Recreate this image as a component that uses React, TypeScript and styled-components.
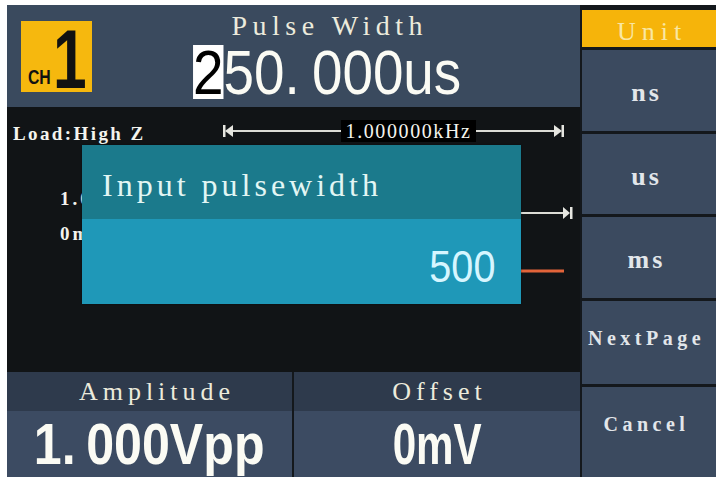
import React from 'react'
import styled, { createGlobalStyle } from 'styled-components'

const GlobalStyle = createGlobalStyle`
  html, body {
    margin: 0;
    padding: 0;
    background: #ffffff;
  }
  body {
    font-family: 'Liberation Serif', 'DejaVu Serif', serif;
  }
`

const Frame = styled.div`
  width: 709px;
  height: 472px;
  margin: 5px 0 0 7px;
  display: grid;
  grid-template-columns: 573px 134px;
  column-gap: 2px;
  background: #14181c;
`

const Main = styled.div`
  display: flex;
  flex-direction: column;
  min-width: 0;
`

const Header = styled.div`
  height: 102px;
  flex: none;
  display: flex;
  padding: 0 18px 0 14px;
  box-sizing: border-box;
  background: #3a4a5e;
`

const Badge = styled.div`
  align-self: center;
  width: 71px;
  height: 71px;
  flex: none;
  box-sizing: border-box;
  padding: 0 0 3px 7px;
  display: flex;
  align-items: flex-end;
  background: #f6b80e;
  color: #111;
  font-family: 'Liberation Sans', Arial, sans-serif;
  font-weight: bold;
`

const BadgeCh = styled.span`
  display: block;
  width: 25px;
  font-size: 21px;
  line-height: 16px;
  height: 16px;
  margin-bottom: 4px;
  white-space: nowrap;
  transform: scaleX(0.75);
  transform-origin: left bottom;
`

const BadgeNum = styled.span`
  display: block;
  width: 32px;
  font-size: 84px;
  line-height: 60px;
  height: 60px;
  transform: scaleX(0.72);
  transform-origin: left bottom;
`

const TitleColumn = styled.div`
  flex: 1;
  display: flex;
  flex-direction: column;
  align-items: center;
  padding-top: 6px;
`

const ParamName = styled.div`
  font-size: 28px;
  line-height: 30px;
  letter-spacing: 5.5px;
  margin-right: -5.5px;
  color: #ecebdc;
  white-space: nowrap;
`

const BigValue = styled.div<{ $squeeze: number; $size?: number; $lh?: number; $bold?: boolean }>`
  font-family: 'Liberation Sans', Arial, sans-serif;
  font-size: ${(p) => p.$size ?? 63}px;
  font-weight: ${(p) => (p.$bold ? 'bold' : 'normal')};
  line-height: ${(p) => p.$lh ?? 63}px;
  color: #fbfbf4;
  white-space: nowrap;
  transform: scaleX(${(p) => p.$squeeze});
`

const Cursor = styled.span`
  display: inline-block;
  height: 54px;
  line-height: 54px;
  background: #ffffff;
  color: #000000;
`

const Dot = styled.span<{ $gap?: number }>`
  margin-right: ${(p) => p.$gap ?? 14}px;
`

const Screen = styled.div`
  flex: 1;
  position: relative;
  display: flex;
  flex-direction: column;
  background: #111416;
  color: #f4f4ee;
`

const LoadRow = styled.div`
  height: 40px;
  flex: none;
  box-sizing: border-box;
  padding: 13px 0 0 6px;
  display: flex;
  align-items: flex-start;
`

const LoadText = styled.div`
  width: 210px;
  flex: none;
  margin-top: 3px;
  font-size: 19px;
  font-weight: bold;
  line-height: 22px;
  letter-spacing: 2.4px;
  white-space: nowrap;
`

const Ruler = styled.div`
  display: flex;
  align-items: center;
  height: 22px;
`

const RuleLine = styled.div<{ $w: number }>`
  width: ${(p) => p.$w}px;
  height: 2px;
  background: #dcdcd6;
`

const FreqLabel = styled.div`
  width: 135px;
  height: 22px;
  line-height: 22px;
  text-align: center;
  background: #000000;
  font-size: 20px;
  letter-spacing: 1.6px;
  white-space: nowrap;
`

const WaveArea = styled.div`
  flex: 1;
  position: relative;
  padding: 34px 0 0 53px;
`

const WaveSvg = styled.svg`
  position: absolute;
  left: 0;
  top: 0;
`

const MarkLabel = styled.div`
  position: relative;
  font-size: 19px;
  font-weight: bold;
  line-height: 35px;
  letter-spacing: 3px;
`

const Popup = styled.div`
  position: absolute;
  left: 75px;
  top: 38px;
  width: 439px;
  height: 159px;
  display: flex;
  flex-direction: column;
  box-shadow: 0 0 2px rgba(0, 0, 0, 0.4);
`

const PopupHead = styled.div`
  height: 74px;
  flex: none;
  box-sizing: border-box;
  padding: 6px 0 0 20px;
  display: flex;
  align-items: center;
  background: #1b7a8c;
  color: #e2f6f4;
  font-size: 32px;
  letter-spacing: 4px;
  white-space: nowrap;
`

const PopupBody = styled.div`
  flex: 1;
  box-sizing: border-box;
  padding: 10px 26px 0 0;
  display: flex;
  align-items: center;
  justify-content: flex-end;
  background: #1f98b8;
`

const InputValue = styled.div`
  font-family: 'Liberation Sans', Arial, sans-serif;
  font-size: 44px;
  line-height: 50px;
  color: #d6f6ff;
  transform: scaleX(0.9);
  transform-origin: right center;
`

const Bottom = styled.div`
  height: 105px;
  flex: none;
  display: grid;
  grid-template-columns: 285px 1fr;
  column-gap: 2px;
  background: #14181c;
`

const Panel = styled.div`
  display: flex;
  flex-direction: column;
`

const PanelLabel = styled.div<{ $shift?: number }>`
  height: 39px;
  line-height: 39px;
  text-align: center;
  background: #2e3a4c;
  color: #ecebdc;
  font-size: 26px;
  letter-spacing: 5px;
  padding-left: ${(p) => p.$shift ?? 5}px;
`

const PanelValue = styled.div`
  height: 66px;
  display: flex;
  justify-content: center;
  background: #3c4b62;
`

const Menu = styled.div`
  display: flex;
  flex-direction: column;
  gap: 3px;
  padding-top: 5px;
`

const MenuTitle = styled.div`
  height: 37px;
  flex: none;
  box-sizing: border-box;
  padding-top: 6px;
  display: flex;
  align-items: center;
  justify-content: center;
  background: #f6b40a;
  color: #f9e7a2;
  font-size: 26px;
  letter-spacing: 6px;
  text-indent: 6px;
`

const MenuItem = styled.div<{ $shift: number; $small?: boolean }>`
  flex: 1;
  box-sizing: border-box;
  padding: ${(p) => (p.$shift > 0 ? `${p.$shift}px 5px 0 0` : `0 5px ${-p.$shift}px 0`)};
  display: flex;
  align-items: center;
  justify-content: center;
  background: #3b4a5f;
  color: #e2e6ea;
  font-size: ${(p) => (p.$small ? 20 : 26)}px;
  font-weight: bold;
  letter-spacing: ${(p) => (p.$small ? 4.5 : 3)}px;
  white-space: nowrap;
`

const ArrowLeft = () => (
  <svg width="10" height="12" viewBox="0 0 10 12">
    <rect x="0" y="0" width="2.5" height="12" fill="#e6e6e0" />
    <polygon points="10,0 2,6 10,12" fill="#e6e6e0" />
  </svg>
)

const ArrowRight = () => (
  <svg width="10" height="12" viewBox="0 0 10 12">
    <polygon points="0,0 8,6 0,12" fill="#e6e6e0" />
    <rect x="7.5" y="0" width="2.5" height="12" fill="#e6e6e0" />
  </svg>
)

const menuItems = [
  { label: 'ns', shift: 6 },
  { label: 'us', shift: 6 },
  { label: 'ms', shift: 6 },
  { label: 'NextPage', shift: -9, small: true },
  { label: 'Cancel', shift: -15, small: true },
]

export default function App() {
  return (
    <>
      <GlobalStyle />
      <Frame>
        <Main>
          <Header>
            <Badge>
              <BadgeCh>CH</BadgeCh>
              <BadgeNum>1</BadgeNum>
            </Badge>
            <TitleColumn>
              <ParamName>Pulse Width</ParamName>
              <BigValue $squeeze={0.87}>
                <Cursor>2</Cursor>50<Dot>.</Dot>000us
              </BigValue>
            </TitleColumn>
          </Header>

          <Screen>
            <LoadRow>
              <LoadText>Load:High Z</LoadText>
              <Ruler>
                <ArrowLeft />
                <RuleLine $w={108} />
                <FreqLabel>1.000000kHz</FreqLabel>
                <RuleLine $w={78} />
                <ArrowRight />
              </Ruler>
            </LoadRow>

            <WaveArea>
              <WaveSvg width="573" height="225" viewBox="0 0 573 225">
                <line x1="120" y1="66" x2="557" y2="66" stroke="#dcdcd6" strokeWidth="2" />
                <polygon points="556,60 563,66 556,72" fill="#e6e6e0" />
                <rect x="563" y="60" width="2.5" height="12" fill="#e6e6e0" />
                <line x1="300" y1="124" x2="557" y2="124" stroke="#e3643a" strokeWidth="3" />
              </WaveSvg>
              <MarkLabel>1.000V</MarkLabel>
              <MarkLabel>0mV</MarkLabel>
            </WaveArea>

            <Popup>
              <PopupHead>Input pulsewidth</PopupHead>
              <PopupBody>
                <InputValue>500</InputValue>
              </PopupBody>
            </Popup>
          </Screen>

          <Bottom>
            <Panel>
              <PanelLabel $shift={15}>Amplitude</PanelLabel>
              <PanelValue>
                <BigValue $squeeze={0.88} $size={57} $lh={66} $bold>
                  1<Dot $gap={12}>.</Dot>000Vpp
                </BigValue>
              </PanelValue>
            </Panel>
            <Panel>
              <PanelLabel>Offset</PanelLabel>
              <PanelValue>
                <BigValue $squeeze={0.74} $size={57} $lh={66} $bold>
                  0mV
                </BigValue>
              </PanelValue>
            </Panel>
          </Bottom>
        </Main>

        <Menu>
          <MenuTitle>Unit</MenuTitle>
          {menuItems.map((item) => (
            <MenuItem key={item.label} $shift={item.shift} $small={item.small}>
              {item.label}
            </MenuItem>
          ))}
        </Menu>
      </Frame>
    </>
  )
}
